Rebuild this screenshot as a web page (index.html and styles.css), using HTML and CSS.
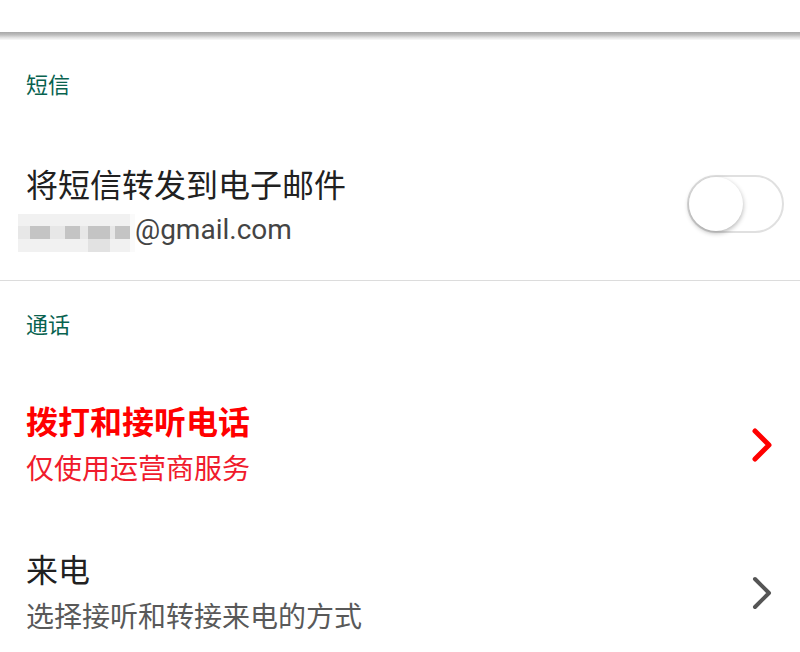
FILE: index.html
```html
<!DOCTYPE html>
<html>

<head>
    <meta charset="UTF-8">
    <title>设置</title>
    <link rel="stylesheet" href="styles.css">
</head>

<body>
    <div class="appbar"></div>
    <div class="shadow"></div>

    <!-- 短信 -->
    <div class="section">
        <div class="section-title">短信</div>
        <div class="row">
            <div class="text">
                <div class="title">将短信转发到电子邮件</div>
                <div class="sub mailrow"><span class="blur">
                    <i class="a"></i><i class="a"></i><i class="a"></i><i class="a"></i><i class="a"></i><i class="a"></i><i class="a"></i><i class="a"></i><i class="w"></i>
                    <i class="b"></i><i class="d"></i><i class="b"></i><i class="d"></i><i class="b"></i><i class="d"></i><i class="b"></i><i class="d"></i><i class="w"></i>
                    <i class="a"></i><i class="a"></i><i class="a"></i><i class="a"></i><i class="a"></i><i class="c"></i><i class="a"></i><i class="a"></i><i class="w"></i>
                </span><span class="mail">@gmail.com</span></div>
            </div>
            <div class="switch"><div class="thumb"></div></div>
        </div>
    </div>
    <div class="divider"></div>

    <!-- 通话 -->
    <div class="section">
        <div class="section-title">通话</div>
        <div class="row">
            <div class="text">
                <div class="title red">拨打和接听电话</div>
                <div class="sub red">仅使用运营商服务</div>
            </div>
            <svg class="chev" width="22" height="36" viewBox="0 0 22 36"><polyline points="4,4 18,18 4,32" fill="none" stroke="#ff0000" stroke-width="5" stroke-linecap="round" stroke-linejoin="round"/></svg>
        </div>
        <div class="row">
            <div class="text">
                <div class="title">来电</div>
                <div class="sub">选择接听和转接来电的方式</div>
            </div>
            <svg class="chev" width="22" height="36" viewBox="0 0 22 36"><polyline points="4,4 18,18 4,32" fill="none" stroke="#555" stroke-width="4" stroke-linecap="round" stroke-linejoin="round"/></svg>
        </div>
    </div>
</body>

</html>
```

FILE: styles.css
```css
* {box-sizing: border-box;}

body {
    margin: 0;
    background: #fff;
    font-family: "Noto Sans CJK SC", "Noto Sans", sans-serif;
    color: #212121;
}

/* 상단 바 + 그림자 */
.appbar {height: 32px; background: #fff;}
.shadow {
    height: 8px;
    background: linear-gradient(#a8a8a8, #bdbdbd 35%, #e2e2e2 70%, #fafafa);
}

/* 섹션 */
.section-title {
    padding: 28px 26px 38px;
    font-size: 22px;
    line-height: 30px;
    color: #08624f;
}
.divider {height: 1px; background: #dcdcdc;}
.divider + .section .section-title {padding: 27px 26px 33px;}

/* 항목 */
.row {
    display: flex;
    align-items: center;
    padding: 25px 0 25px 26px;
}
.divider + .section .row {padding: 27px 0 27px 26px;}
.text {flex: 1;}
.title {font-size: 32px; line-height: 44px;}
.sub {font-size: 28px; line-height: 50px; color: #595959;}
.red {color: #ff0000;}
.title.red {font-weight: bold;}
.sub.red {color: #f01b2c;}

/* 메일 주소 (모자이크) */
.mailrow {display: flex; align-items: center; height: 50px;}
.blur {
    display: grid;
    grid-template-columns: 12px 20px 15px 15px 8px 22px 5px 15px 5px;
    grid-template-rows: 12px 13px 13px;
    margin: 6px 0 0 -8px;
}
.blur i {display: block;}
.blur .a {background: #f1f1f1;}
.blur .b {background: #e7e7e7;}
.blur .c {background: #e2e2e2;}
.blur .d {background: #c4c4c4;}
.blur .w {background: #fafafa;}
.mail {font-family: Roboto, sans-serif; color: #444;}

/* 스위치 */
.switch {
    width: 97px;
    height: 58px;
    margin: -8px 16px 0 0;
    border: 2px solid #e0e0e0;
    border-radius: 29px;
    background: #fff;
    display: flex;
    align-items: center;
}
.thumb {
    width: 54px;
    height: 54px;
    border-radius: 50%;
    background: #fff;
    box-shadow: 0 2px 5px rgba(0, 0, 0, 0.3);
}

.chev {margin-right: 27px;}
```
